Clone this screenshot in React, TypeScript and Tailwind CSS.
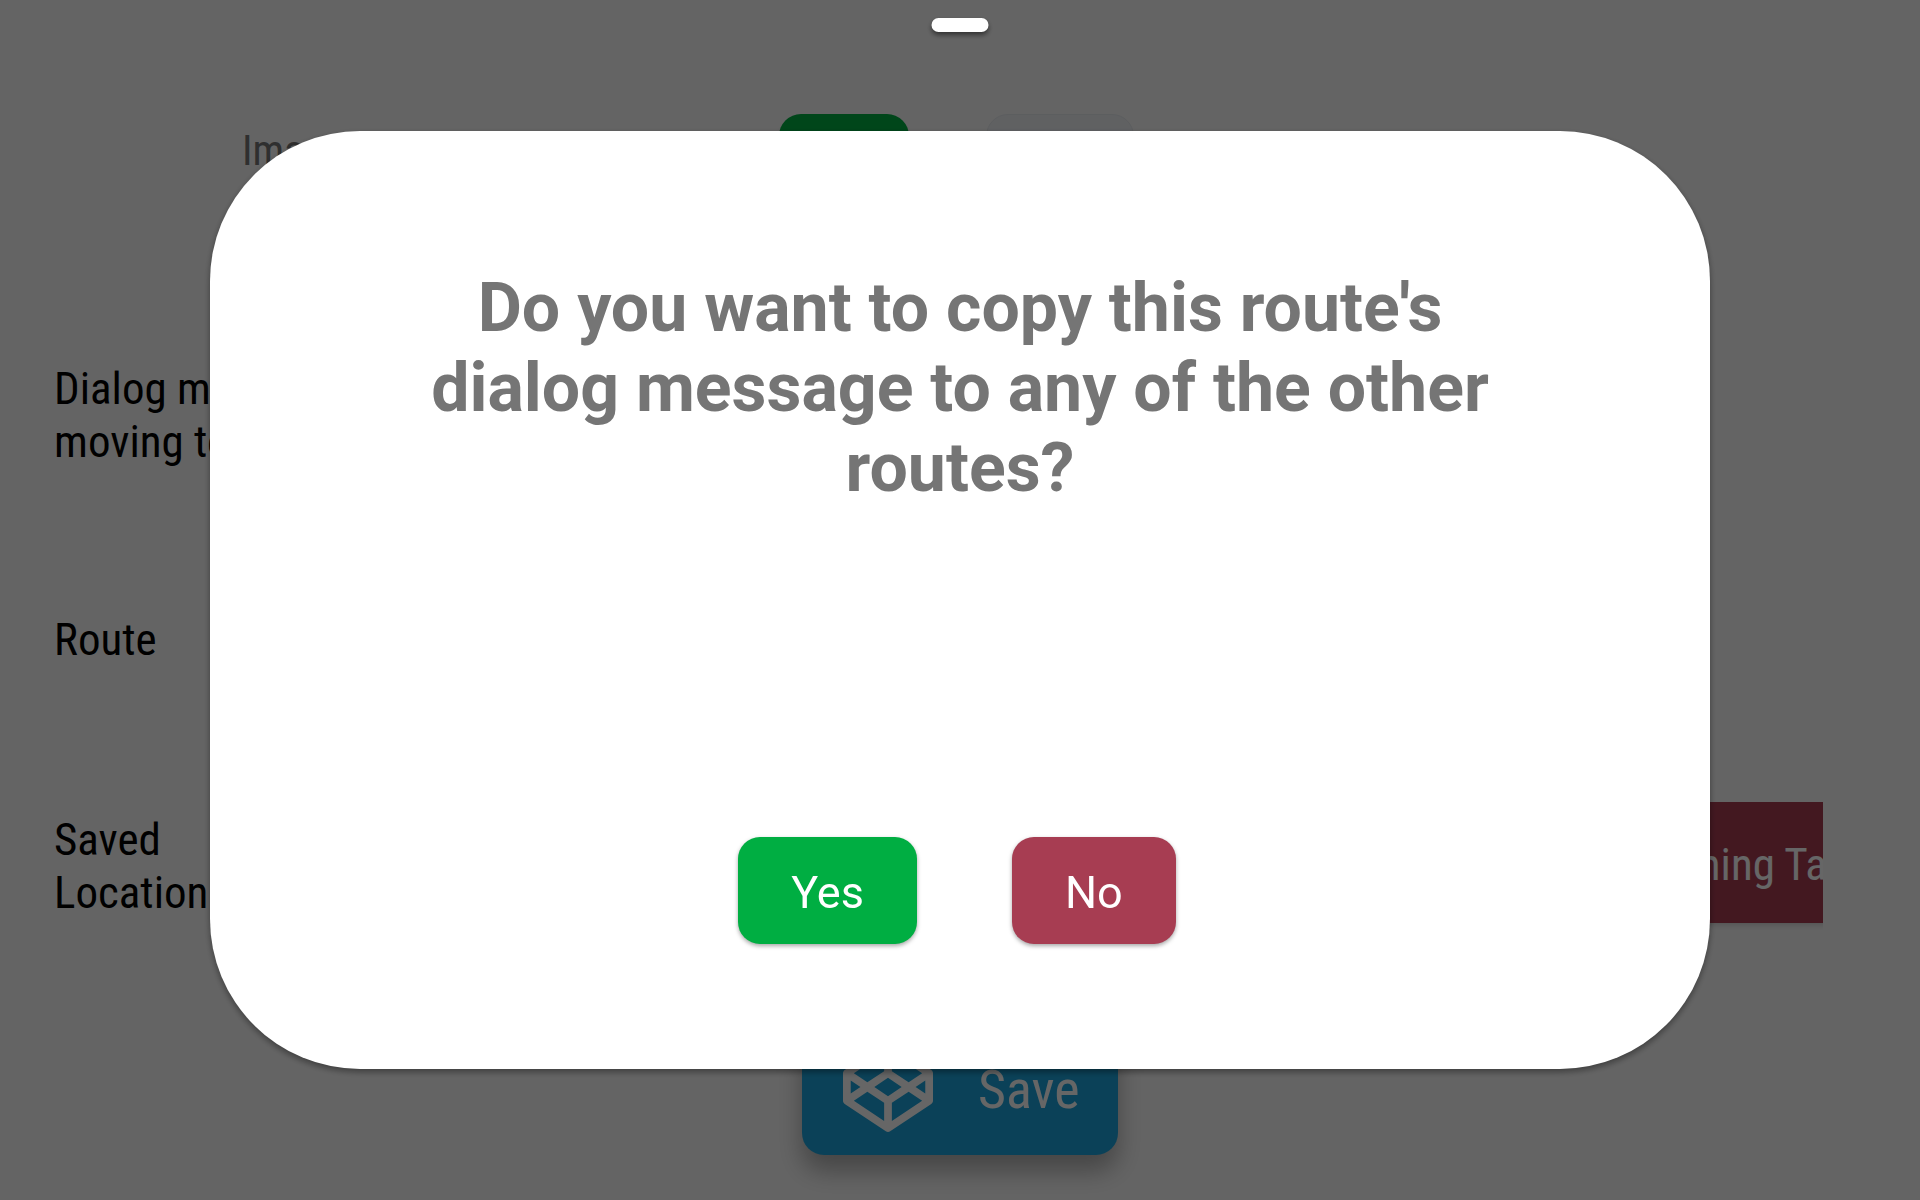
import React from 'react';
import { FaCodepen } from 'react-icons/fa';

function SettingsPage() {
  return (
    <main inert className="flex min-h-screen flex-col bg-[#fafafa] pl-[54px] pr-[97px] font-['Roboto_Condensed','Roboto',sans-serif] text-[45px] leading-[53px] text-black">
      <section className="flex h-[230px] items-start pt-[114px]">
        <span className="ml-[188px] mt-3 w-[537px] text-[42px] leading-[50px] text-[#757575]">Image</span>
        <button className="h-[107px] w-[130px] rounded-[22px] bg-[#00ae42] text-white shadow-md">On</button>
        <button className="ml-[77px] h-[107px] w-[148px] rounded-[22px] border border-[#e6eaee] bg-[#f0f2f6] text-[#757575]">Off</button>
      </section>
      <section className="flex h-[370px] items-center">
        <p className="whitespace-nowrap">
          Dialog message when
          <br />
          moving to route
        </p>
      </section>
      <section className="flex h-[78px] items-center">
        <p>Route</p>
      </section>
      <section className="mt-[120px] flex items-center">
        <p className="w-[156px] shrink-0">Saved Location</p>
        <div className="ml-auto flex h-[136px] w-[320px] items-start overflow-hidden pt-1">
          <button className="h-[121px] w-[400px] shrink-0 whitespace-nowrap bg-[#a73d52] pl-[139px] pt-1 text-left text-white shadow-md">
            Turning Table
          </button>
        </div>
      </section>
      <section className="mt-[85px] flex justify-center pl-[43px]">
        <button className="flex h-[136px] w-[316px] items-center gap-[45px] rounded-[22px] bg-[#1ca4dc] pl-[41px] text-[54px] text-white shadow-[0_16px_24px_rgba(0,0,0,0.3)]">
          <FaCodepen className="size-[90px] shrink-0" aria-hidden="true" />
          <span className="pt-1">Save</span>
        </button>
      </section>
    </main>
  );
}

function CopyMessageDialog() {
  return (
    <div className="fixed inset-0 flex items-center justify-center bg-black/60">
      <div className="absolute left-1/2 top-[18px] h-[14px] w-[57px] -translate-x-1/2 rounded-full bg-white shadow-[0_3px_5px_rgba(0,0,0,0.5)]" />
      <div
        role="dialog"
        aria-modal="true"
        aria-labelledby="dialog-title"
        className="flex h-[938px] w-[1500px] max-w-full flex-col items-center justify-between rounded-[150px] bg-white pb-[125px] pt-[137px] font-['Roboto',sans-serif] shadow-[0_3px_6px_rgba(0,0,0,0.4)]"
      >
        <h1 id="dialog-title" className="max-w-[1100px] text-center text-[68px] font-bold leading-[80px] text-[#757575]">
          Do you want to copy this route's dialog message to any of the other routes?
        </h1>
        <div className="flex gap-[95px] pr-[6px] text-[45px] leading-[53px] text-white">
          <button className="h-[107px] rounded-[22px] bg-[#00ae42] px-[53px] pt-1 shadow-[0_2px_4px_rgba(0,0,0,0.35)]">Yes</button>
          <button className="h-[107px] rounded-[22px] bg-[#a73d52] px-[53px] pt-1 shadow-[0_2px_4px_rgba(0,0,0,0.35)]">No</button>
        </div>
      </div>
    </div>
  );
}

export default function App() {
  return (
    <>
      <SettingsPage />
      <CopyMessageDialog />
    </>
  );
}
